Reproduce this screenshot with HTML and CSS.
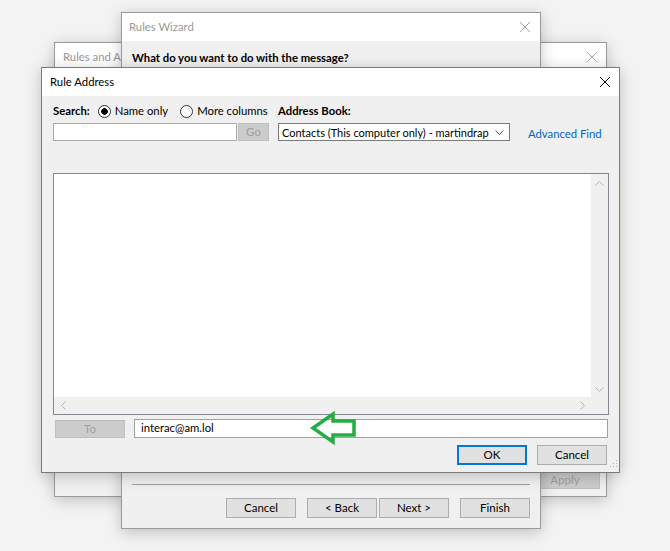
FILE: index.html
```html
<!DOCTYPE html>
<html lang="en">
  <head>
    <meta charset="UTF-8" />
    <meta name="viewport" content="width=device-width, initial-scale=1.0" />
    <title>Rule Address</title>
    <link rel="stylesheet" href="styles.css">
  </head>
  <body>
    <div class="desktop">
      <!-- back window -->
      <div class="window win-alerts">
        <div class="titlebar inactive">
          <span class="title">Rules and Alerts</span>
          <svg class="close" viewBox="0 0 10 10"><path d="M0 0L10 10M10 0L0 10" /></svg>
        </div>
        <div class="alerts-body">
          <button class="button disabled apply">Apply</button>
        </div>
      </div>

      <!-- middle window -->
      <div class="window win-wizard">
        <div class="titlebar inactive">
          <span class="title">Rules Wizard</span>
          <svg class="close" viewBox="0 0 10 10"><path d="M0 0L10 10M10 0L0 10" /></svg>
        </div>
        <div class="wizard-body">
          <div class="question">What do you want to do with the message?</div>
          <div class="spacer"></div>
          <div class="separator"></div>
          <div class="wizard-buttons">
            <button class="button">Cancel</button>
            <div class="nav-pair">
              <button class="button">&lt; Back</button>
              <button class="button">Next &gt;</button>
            </div>
            <button class="button">Finish</button>
          </div>
        </div>
      </div>

      <!-- active dialog -->
      <div class="window win-address">
        <div class="titlebar">
          <span class="title">Rule Address</span>
          <svg class="close" viewBox="0 0 10 10"><path d="M0 0L10 10M10 0L0 10" /></svg>
        </div>
        <div class="address-body">
          <div class="search-panel">
            <div class="search-group">
              <div class="label-row">
                <span class="bold">Search:</span>
                <span class="radio checked"></span><span>Name only</span>
                <span class="radio more"></span><span>More columns</span>
              </div>
              <div class="field-row">
                <div class="textbox search-box"></div>
                <button class="button disabled go">Go</button>
              </div>
            </div>
            <div class="book-group">
              <div class="label-row"><span class="bold">Address Book:</span></div>
              <div class="field-row">
                <div class="combo">
                  <span class="combo-text">Contacts (This computer only) - martindrap</span>
                  <svg class="chevron" viewBox="0 0 9 5"><path d="M0.5 0.5L4.5 4.5L8.5 0.5" /></svg>
                </div>
                <a class="link" href="#">Advanced Find</a>
              </div>
            </div>
          </div>

          <div class="listbox">
            <div class="list-main">
              <div class="list-area"></div>
              <div class="vscroll">
                <svg viewBox="0 0 9 5"><path d="M0.5 4.5L4.5 0.5L8.5 4.5" /></svg>
                <svg viewBox="0 0 9 5"><path d="M0.5 0.5L4.5 4.5L8.5 0.5" /></svg>
              </div>
            </div>
            <div class="hscroll">
              <svg viewBox="0 0 5 9"><path d="M4.5 0.5L0.5 4.5L4.5 8.5" /></svg>
              <svg viewBox="0 0 5 9"><path d="M0.5 0.5L4.5 4.5L0.5 8.5" /></svg>
              <div class="corner"></div>
            </div>
          </div>

          <div class="to-row">
            <button class="button disabled to">To</button>
            <div class="textbox to-box">interac@am.lol</div>
          </div>

          <div class="dialog-buttons">
            <button class="button default">OK</button>
            <button class="button">Cancel</button>
          </div>
        </div>
        <svg class="grip" viewBox="0 0 8 12">
          <rect x="6" y="2" width="1" height="1" /><rect x="6" y="5" width="1" height="1" />
          <rect x="3" y="5" width="1" height="1" /><rect x="6" y="8" width="1" height="1" />
          <rect x="3" y="8" width="1" height="1" /><rect x="0" y="8" width="1" height="1" />
        </svg>
      </div>

      <svg class="pointer" viewBox="0 0 50 38">
        <path d="M4 19L24 5L24 12L45 12L45 26L24 26L24 33Z" />
      </svg>
    </div>
  </body>
</html>
```

FILE: styles.css
```css
body {
  margin: 0;
  font-family: Lato, "Liberation Sans", Arial, sans-serif;
  font-size: 11.3px;
  color: #000;
  background-color: #f3f3f3;
}

.desktop {
  position: relative;
  width: 670px;
  height: 551px;
  overflow: hidden;
  white-space: nowrap;
}

.window {
  position: absolute;
  box-sizing: border-box;
  display: flex;
  flex-direction: column;
  background-color: #f0f0f0;
  border: 1px solid #9a9a9a;
  box-shadow: 0 3px 14px rgba(0, 0, 0, 0.22);
}

.win-alerts {
  left: 54px;
  top: 42px;
  width: 553px;
  height: 455px;
}

.win-wizard {
  left: 121px;
  top: 12px;
  width: 420px;
  height: 517px;
}

.win-address {
  left: 41px;
  top: 67px;
  width: 579px;
  height: 406px;
  border-color: #7a7a7a;
}

.titlebar {
  display: flex;
  align-items: center;
  justify-content: space-between;
  height: 28px;
  padding: 0 9px 0 8px;
  background-color: #fff;
  flex-shrink: 0;
}

.titlebar .title {
  line-height: 14px;
}

.titlebar.inactive .title {
  color: #999;
}

/* only the start of this title shows beside the wizard */
.win-alerts .title {
  width: 58px;
  overflow: hidden;
}

.close {
  width: 10px;
  height: 10px;
  fill: none;
  stroke: #000;
  stroke-width: 1;
}

.titlebar.inactive .close {
  stroke: #a6a6a6;
}

.win-wizard .titlebar {
  padding-left: 7px;
  padding-right: 10px;
}

.button {
  box-sizing: border-box;
  width: 70px;
  height: 20px;
  padding: 0;
  font-family: inherit;
  font-size: 11.5px;
  line-height: 16px;
  color: #000;
  background-color: #e1e1e1;
  border: 1px solid #adadad;
}

.button.disabled {
  color: #a0a0a0;
  background-color: #cccccc;
  border-color: #bfbfbf;
}

.button.default {
  border-color: #0078d7;
  box-shadow: inset 0 0 0 1px #0078d7;
}

/* Rules and Alerts */
.alerts-body {
  flex: 1;
  display: flex;
  align-items: flex-end;
  justify-content: flex-end;
  padding: 0 6px 7px 0;
}

.apply {
  height: 19px;
}

/* Rules Wizard */
.wizard-body {
  flex: 1;
  display: flex;
  flex-direction: column;
  padding: 10px 10px 10px 10px;
}

.question {
  font-weight: bold;
  line-height: 14px;
}

.spacer {
  flex: 1;
}

.separator {
  height: 1px;
  background-color: #a0a0a0;
  margin-bottom: 13px;
}

.wizard-buttons {
  display: flex;
  justify-content: flex-end;
  gap: 11px;
}

.nav-pair {
  display: flex;
  gap: 2px;
}

/* Rule Address */
.address-body {
  display: flex;
  flex-direction: column;
  padding: 8px 10px 0 11px;
}

.search-panel {
  display: flex;
}

.search-group {
  width: 225px;
}

.label-row {
  display: flex;
  align-items: center;
  height: 14px;
  line-height: 14px;
}

.bold {
  font-weight: bold;
}

.radio {
  box-sizing: border-box;
  width: 13px;
  height: 13px;
  margin: 0 4px 0 8px;
  border: 1px solid #333;
  border-radius: 50%;
  background-color: #fff;
}

.radio.more {
  margin-left: 12px;
}

.radio.checked {
  background: radial-gradient(circle, #000 0, #000 3px, #fff 3.5px);
}

.field-row {
  display: flex;
  align-items: center;
  margin-top: 5px;
  height: 18px;
}

.textbox {
  box-sizing: border-box;
  height: 18px;
  background-color: #fff;
  border: 1px solid #a9a9a9;
}

.search-box {
  width: 184px;
}

.go {
  width: 31px;
  height: 18px;
  margin-left: 1px;
}

.combo {
  box-sizing: border-box;
  display: flex;
  align-items: center;
  width: 232px;
  height: 18px;
  padding: 0 5px 0 3px;
  background-color: #fff;
  border: 1px solid #7a7a7a;
}

.combo-text {
  flex: 1;
  min-width: 0;
  font-size: 11px;
  overflow: hidden;
}

.chevron {
  width: 9px;
  height: 5px;
  margin-left: 3px;
  flex-shrink: 0;
  fill: none;
  stroke: #555;
}

.link {
  margin-left: 18px;
  color: #0066cc;
  text-decoration: none;
  margin-top: 2px;
}

.listbox {
  box-sizing: border-box;
  display: flex;
  flex-direction: column;
  margin-top: 32px;
  width: 556px;
  height: 242px;
  border: 1px solid #828790;
  background-color: #fff;
}

.list-main {
  flex: 1;
  display: flex;
}

.list-area {
  flex: 1;
}

.vscroll {
  width: 17px;
  display: flex;
  flex-direction: column;
  justify-content: space-between;
  align-items: center;
  padding: 7px 0 5px;
  background-color: #f0f0f0;
}

.vscroll svg {
  width: 9px;
  height: 5px;
  fill: none;
  stroke: #b5b5b5;
}

.hscroll {
  display: flex;
  align-items: center;
  justify-content: space-between;
  height: 17px;
  padding-left: 7px;
  background-color: #f0f0f0;
}

.hscroll svg {
  width: 5px;
  height: 9px;
  fill: none;
  stroke: #b5b5b5;
}

.hscroll svg + svg {
  margin-left: auto;
  margin-right: 6px;
}

.corner {
  width: 17px;
  height: 17px;
  background-color: #f0f0f0;
}

.to-row {
  display: flex;
  align-items: center;
  margin-top: 4px;
  height: 19px;
}

.to {
  width: 70px;
  height: 18px;
  margin: 1px 0 0 2px;
  color: #8f8f8f;
}

.to-box {
  width: 474px;
  height: 19px;
  margin-left: 9px;
  padding-left: 6px;
  line-height: 16px;
  border-color: #a0a0a0;
}

.dialog-buttons {
  display: flex;
  justify-content: flex-end;
  gap: 10px;
  margin: 7px 2px 0 0;
}

.grip {
  position: absolute;
  right: 1px;
  bottom: 2px;
  width: 8px;
  height: 12px;
  fill: #b0b0b0;
}

.pointer {
  position: absolute;
  left: 309px;
  top: 409px;
  width: 50px;
  height: 38px;
  fill: none;
  stroke: #25ad45;
  stroke-width: 3.5;
  stroke-linejoin: miter;
}
```
